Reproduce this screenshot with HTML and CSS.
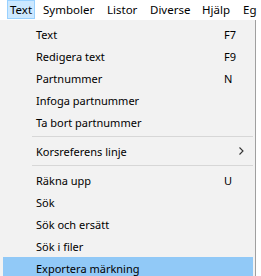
FILE: index.html
```html
<!DOCTYPE html>
<html>
<head>
<meta charset="utf-8">
<link rel="stylesheet" href="styles.css">
</head>
<body>
<div class="menubar">
  <span class="mb-item mb-text active">Text</span>
  <span class="mb-item mb-symboler">Symboler</span>
  <span class="mb-item mb-listor">Listor</span>
  <span class="mb-item mb-diverse">Diverse</span>
  <span class="mb-item mb-hjalp">Hjälp</span>
  <span class="mb-item mb-eg">Eg</span>
</div>
<div class="menu">
  <div class="item"><span class="label">Text</span><span class="key">F7</span></div>
  <div class="item"><span class="label">Redigera text</span><span class="key">F9</span></div>
  <div class="item"><span class="label">Partnummer</span><span class="key">N</span></div>
  <div class="item"><span class="label">Infoga partnummer</span><span class="key"></span></div>
  <div class="item"><span class="label">Ta bort partnummer</span><span class="key"></span></div>
  <div class="sep"></div>
  <div class="item"><span class="label">Korsreferens linje</span><span class="arrow"><svg width="5" height="8" viewBox="0 0 5 8"><path d="M0.5 0.5 L4 4 L0.5 7.5" fill="none" stroke="#333" stroke-width="1.1"/></svg></span></div>
  <div class="sep"></div>
  <div class="item"><span class="label">Räkna upp</span><span class="key">U</span></div>
  <div class="item"><span class="label">Sök</span><span class="key"></span></div>
  <div class="item"><span class="label">Sök och ersätt</span><span class="key"></span></div>
  <div class="item"><span class="label">Sök i filer</span><span class="key"></span></div>
  <div class="item hover"><span class="label">Exportera märkning</span><span class="key"></span></div>
</div>
</body>
</html>
```
FILE: styles.css
```css
html, body {
  margin: 0;
  padding: 0;
  background: #ffffff;
  font-family: "Noto Sans", "Open Sans", sans-serif;
  font-size: 11px;
  color: #000;
  overflow: hidden;
}
.menubar {
  display: flex;
  height: 19px;
  white-space: nowrap;
  padding-left: 7px;
  margin-bottom: 1px;
  overflow: hidden;
  font-size: 11.5px;
}
.mb-item {
  flex-shrink: 0;
  height: 19px;
  line-height: 17px;
  padding-left: 7px;
  box-sizing: border-box;
  border: 1px solid transparent;
  border-left-width: 0;
}
.mb-text {
  width: 28px;
  padding-left: 2px;
  border-left-width: 1px;
}
.mb-symboler { width: 65px; padding-left: 8px; }
.mb-listor { width: 43px; }
.mb-diverse { width: 52px; }
.mb-hjalp { width: 41px; }
.mb-eg { width: 30px; }
.mb-item.active {
  background: #cce8ff;
  border-color: #99d1ff;
}
.menu {
  width: 256px;
  box-sizing: border-box;
  background: #f2f2f2;
  border-right: 1px solid #a0a0a0;
  padding: 3px 2px 3px 3px;
}
.item {
  display: flex;
  align-items: center;
  height: 22px;
  padding-left: 33px;
  padding-right: 18px;
}
.item .label {
  flex: 1;
}
.item .key {
  width: 11px;
}
.item .arrow {
  width: 11px;
  margin-right: -9px;
  display: flex;
  align-items: center;
  justify-content: flex-end;
}
.item.hover {
  background: #91c9f7;
}
.sep {
  height: 7px;
  display: flex;
  align-items: center;
  padding-left: 29px;
}
.sep::after {
  content: "";
  display: block;
  flex: 1;
  height: 1px;
  background: #d7d7d7;
}
```
